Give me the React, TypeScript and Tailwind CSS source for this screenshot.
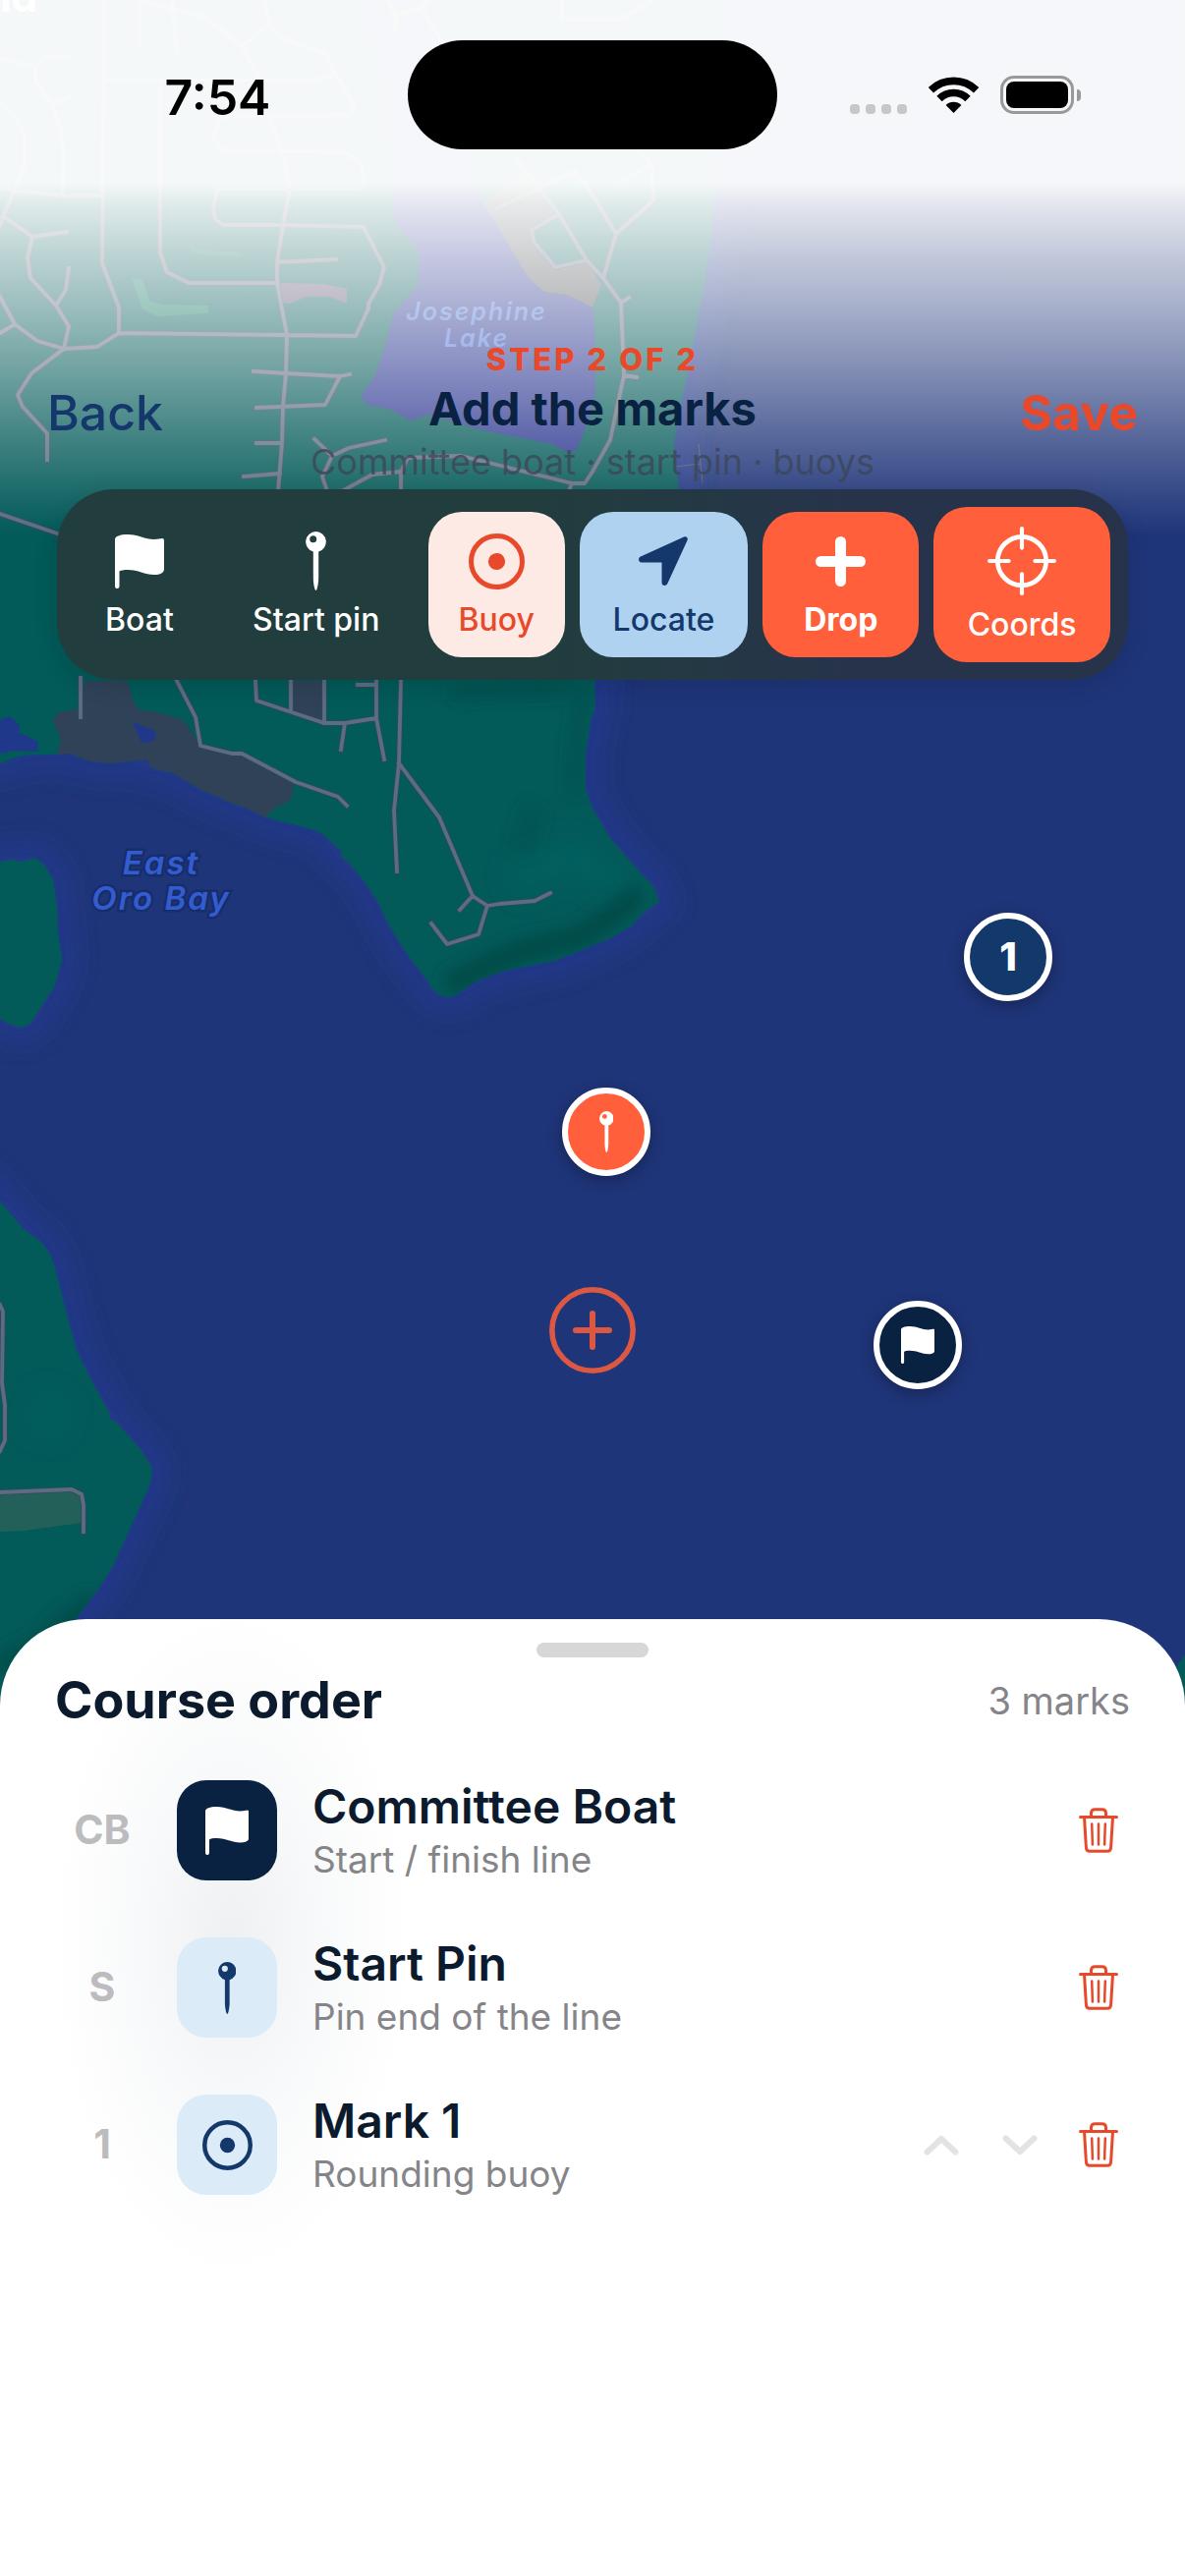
import { useState } from "react";
import type { ReactNode } from "react";

type IconProps = { className?: string };

const FlagIcon = ({ className }: IconProps) => (
  <svg viewBox="0 0 50 55" fill="currentColor" className={className} aria-hidden="true">
    <path d="M0 5C0 2 5 0 13 0C24 0 30 5 40 5C44 5 46 4 48 4Q50 4 50 6V35C50 39 46 41 40 41C30 41 24 36 13 36C9 36 6 36.5 4.5 37.5V52.8A2.2 2.2 0 0 1 0 52.8Z" />
  </svg>
);

const PinIcon = ({ className }: IconProps) => (
  <svg viewBox="0 0 21 60" fill="currentColor" className={className} aria-hidden="true">
    <path
      fillRule="evenodd"
      d="M10.5 0A10.5 10.5 0 0 1 13.2 20.6V47C13.2 52 12.2 57 11.3 59.2Q10.5 60.6 9.7 59.2C8.8 57 7.8 52 7.8 47V20.6A10.5 10.5 0 0 1 10.5 0ZM7.7 4.2A3.5 3.5 0 1 0 7.7 11.2A3.5 3.5 0 1 0 7.7 4.2Z"
    />
  </svg>
);

const TargetIcon = ({ className }: IconProps) => (
  <svg viewBox="0 0 57 57" fill="none" className={className} aria-hidden="true">
    <circle cx="28.5" cy="28.5" r="26" stroke="currentColor" strokeWidth="5" />
    <circle cx="28.5" cy="28.5" r="8.6" fill="currentColor" />
  </svg>
);

const LocateIcon = ({ className }: IconProps) => (
  <svg viewBox="0 0 50 50" fill="currentColor" className={className} aria-hidden="true">
    <path d="M46 .5L2 20.5C-1 22-.5 26.5 3 26.5H23.5V47C23.5 50.5 28 51 29.3 48L49.5 4C50.7 1.5 48.5-.7 46 .5Z" />
  </svg>
);

const PlusIcon = ({ className }: IconProps) => (
  <svg viewBox="0 0 51 51" stroke="currentColor" strokeWidth="11" strokeLinecap="round" className={className} aria-hidden="true">
    <path d="M25.5 5.5V45.5M5.5 25.5H45.5" />
  </svg>
);

const ScopeIcon = ({ className }: IconProps) => (
  <svg viewBox="0 0 68 68" fill="none" stroke="currentColor" strokeLinecap="round" className={className} aria-hidden="true">
    <circle cx="34" cy="34" r="24" strokeWidth="4.6" />
    <path d="M34 2V21M34 47V66M2 34H21M47 34H66" strokeWidth="4" />
  </svg>
);

const TrashIcon = ({ className }: IconProps) => (
  <svg viewBox="0 0 40 46" fill="none" stroke="currentColor" strokeWidth="3" strokeLinecap="round" strokeLinejoin="round" className={className} aria-hidden="true">
    <path d="M1.5 9.4H38.5" />
    <path d="M12.5 9V5.5Q12.5 1.7 16.5 1.7H23.5Q27.5 1.7 27.5 5.5V9" />
    <path d="M5.5 9.5L7.4 40.5Q7.6 44.3 11 44.3H29Q32.4 44.3 32.6 40.5L34.5 9.5" />
    <path d="M13.2 16.5L13.9 37.5M20 16.5V37.5M26.8 16.5L26.1 37.5" strokeWidth="2.5" />
  </svg>
);

const ChevronIcon = ({ className }: IconProps) => (
  <svg viewBox="0 0 36 21" fill="none" stroke="currentColor" strokeWidth="6" strokeLinecap="round" strokeLinejoin="round" className={className} aria-hidden="true">
    <path d="M3.5 17.5L18 4L32.5 17.5" />
  </svg>
);

const WifiIcon = ({ className }: IconProps) => (
  <svg viewBox="0 0 51 37" fill="none" stroke="currentColor" className={className} aria-hidden="true">
    <path d="M2.4 13.8A33 33 0 0 1 48.6 13.8" strokeWidth="7.6" />
    <path d="M11 22.5A20.5 20.5 0 0 1 40 22.5" strokeWidth="7.6" />
    <path d="M25.5 37L17.6 29A11.5 11.5 0 0 1 33.4 29Z" fill="currentColor" stroke="none" />
  </svg>
);

const MAINLAND =
  "M0 0H738L733 120L727 197L724 243L715 300L699 383L690 425L686 453L691 498L675 560L630 640L605 693L606 720L602 730L596 767V803L603 823L621 853L647 883L665 902L671 918L656 928L643 942L621 955L565 978L513 988L484 999L464 1013Q454 1019 440 1007L435 998L422 982L407 960L396 942L384 917L371 898L354 877L347 872L348 867L328 849L321 845L270 832L252 823L237 818L205 804L176 787L153 781L150 773L112 777L92 775L71 767L22 769L0 777Z";
const ISLAND = "M0 877L11 875L22 877L36 873L45 880L54 895L58 920L59 950L63 977L56 1003L31 1042L20 1046L11 1043L0 1037Z";
const SOUTHWEST =
  "M0 1222L23 1250L43 1265L50 1275L55 1287L67 1334L78 1375L93 1405L111 1437L112 1445L117 1446L143 1475L155 1494L153 1510L115 1594L100 1618L78 1647L0 1740Z";

const ROADS = [
  "M106 0L104 268L121 313V339L292 341L362 342L375 314V309L386 290L391 272L370 231L288 229H227L219 223L217 212L222 192H365L370 187L368 168L352 155L224 153L217 138L224 119L356 117L360 107L342 76L331 55L288 39L274 25L269 0",
  "M121 339L99 353L65 355L38 347L15 330L0 302M15 330L0 339",
  "M65 355L70 332L57 311L31 283L28 262L33 241L3 220M33 241L68 236M57 311L67 295L70 273",
  "M65 355L32 380L18 402L23 414L48 441V468",
  "M0 230L3 220L15 193L25 167V137L13 115L0 105",
  "M0 190L15 194L63 199H105M63 199L65 160L62 132L53 107L36 82V68L0 60M36 68L48 58L72 57M53 107L72 97",
  "M163 83V257L170 277L192 288H283",
  "M138 0L208 17L246 47L263 78M106 81L319 82L342 76M142 0V45M175 0L180 52M246 47L274 25",
  "M276 122L287 155L295 192L288 229L282 268V288L292 341L291 380L288 413L287 451L283 500",
  "M282 267L342 264M258 378L291 380L346 383L356 381M346 383L331 412L261 415M261 451H287M248 485L285 482",
  "M320 447L338 464L355 456L392 448M338 464L328 485L333 500",
  "M348 500L379 483L408 480L415 466L469 464L582 492H595L603 480L621 448L635 382L632 308L614 283L627 238L665 204L663 167L649 153M408 480V500M582 492L579 500",
  "M632 308L640 303M635 382L648 384M663 167L630 185",
  "M627 238L603 198L585 174L504 213M525 162L569 218L597 265L614 283M569 218L541 234L543 246L565 272L597 265",
  "M395 0L403 16L402 30M403 16L428 8L436 0M428 8L450 42M572 0V19H632L665 0",
  "M0 523L58 543M82 690V730",
  "M180 693L199 730L204 759L236 767H246L301 796L344 811L353 820",
  "M260 693L261 713L330 736H351L383 731V693M383 731L391 773M364 697H383M351 736L347 763M296 723V693M330 736V693",
  "M408 693L406 777L401 825L404 887M406 777L447 832L481 912L496 922L508 920L544 917L560 909M481 912L468 926M496 922L487 951L455 961L439 940",
  "M0 1328L3 1335L2 1408L5 1430V1466L0 1477M0 1519L73 1516L83 1521L85 1532V1559",
];

const MapBackdrop = () => (
  <svg
    viewBox="0 0 1206 1760"
    preserveAspectRatio="xMidYMin slice"
    className="absolute inset-x-0 top-0 w-full bg-[#1f3579]"
    aria-hidden="true"
  >
    <defs>
      <filter id="soft" x="-20%" y="-20%" width="140%" height="140%">
        <feGaussianBlur stdDeviation="12" />
      </filter>
      <filter id="soft-small" x="-20%" y="-20%" width="140%" height="140%">
        <feGaussianBlur stdDeviation="8" />
      </filter>
      <clipPath id="land">
        <path d={MAINLAND} />
        <path d={ISLAND} />
        <path d={SOUTHWEST} />
      </clipPath>
      <linearGradient id="haze" x1="0" y1="0" x2="0" y2="1">
        <stop offset="0" stopColor="#fff" stopOpacity="0.96" />
        <stop offset="0.34" stopColor="#fff" stopOpacity="0.96" />
        <stop offset="0.385" stopColor="#fff" stopOpacity="0.87" />
        <stop offset="0.48" stopColor="#fff" stopOpacity="0.73" />
        <stop offset="0.57" stopColor="#fff" stopOpacity="0.61" />
        <stop offset="0.71" stopColor="#fff" stopOpacity="0.41" />
        <stop offset="0.83" stopColor="#fff" stopOpacity="0.23" />
        <stop offset="0.93" stopColor="#fff" stopOpacity="0.09" />
        <stop offset="1" stopColor="#fff" stopOpacity="0" />
      </linearGradient>
    </defs>

    {/* shallow water along the coast */}
    <g fill="none" stroke="#203888" strokeWidth="34" filter="url(#soft)">
      <path d={MAINLAND} />
      <path d={ISLAND} />
      <path d={SOUTHWEST} />
    </g>

    <g fill="#025a59">
      <path d={MAINLAND} />
      <path d={ISLAND} />
      <path d={SOUTHWEST} />
      <path d="M1206 1684L1180 1720V1760H1206Z" />
    </g>

    {/* hill shading */}
    <g clipPath="url(#land)">
      <g fill="none" stroke="#03423f" filter="url(#soft-small)">
        <path d="M455 1004L490 985L530 968L590 954L625 930L650 908" strokeWidth="22" strokeOpacity="0.65" />
        <path d="M594 700L586 760L584 810" strokeWidth="14" strokeOpacity="0.35" />
        <path d="M545 820L530 870" strokeWidth="26" strokeOpacity="0.25" />
        <path d="M100 1630L40 1680L0 1700" strokeWidth="30" strokeOpacity="0.6" />
        <path d="M460 705L580 700" strokeWidth="16" strokeOpacity="0.35" />
      </g>
      <g fill="none" stroke="#046360" filter="url(#soft)">
        <path d="M520 900L580 870L625 900" strokeWidth="30" strokeOpacity="0.7" />
        <path d="M40 1460L60 1420" strokeWidth="40" strokeOpacity="0.4" />
      </g>
    </g>

    <path fill="#304258" d="M86 693H130L136 715L142 723L156 724L187 733L204 759L246 767L299 795L297 812L290 818L281 821L270 832L252 823L237 818L205 804L176 787L153 781L150 773L112 777L92 775L71 767L58 768L62 753L54 733L60 725L83 721Z" />
    <path fill="#304258" d="M296 693H329L331 735L296 723Z" />
    <path fill="#20388a" d="M0 733L10 729L19 737L20 746L39 755L38 765L13 764L4 767L0 766ZM135 735L157 743L159 751L154 755L144 756Z" />
    <path fill="#24605a" d="M0 1519L73 1516L83 1521V1550L25 1558L0 1559Z" />
    <path fill="#2a3590" d="M362 0L392 90L398 197L402 227L426 257L425 290L400 320L392 353L381 383L367 403L375 413L396 416L417 428L438 422L487 437L562 452L579 461L587 458L600 425L606 400L605 330L603 313L577 300L554 297L538 283L515 245L490 205L470 130L440 0Z" />
    <path fill="#5b5258" fillOpacity="0.85" d="M490 205L540 175L569 218L541 234L543 246L565 272L597 265L612 290L603 313L577 300L554 297L538 283L515 245Z" />
    <path fill="#5a5270" d="M284 288L330 289L353 294V309L335 302H312L295 309L287 308Z" />
    <path fill="#12805e" fillOpacity="0.7" d="M134 283L145 284L152 306L165 310L212 311V319L160 322L145 315Z" />
    <path fill="#12805e" fillOpacity="0.4" d="M188 243L200 254L245 257V261L210 260L195 256Z" />
    <path fill="none" stroke="#7b7a4a" strokeOpacity="0.5" strokeWidth="1" d="M687 475L713 472M711 452L715 492" />

    <g fill="none" strokeLinejoin="round" strokeLinecap="square">
      <path d={ROADS.join("")} stroke="#2f4a5c" strokeWidth="5.6" />
      <path d={ROADS.join("")} stroke="#5d6c80" strokeWidth="3.8" />
    </g>

    <g fontFamily="Inter, 'Liberation Sans', sans-serif" fontWeight="600" textAnchor="middle" fontStyle="italic">
      <g fill="#4a74dc" fontSize="25" letterSpacing="2">
        <text x="485" y="326">Josephine</text>
        <text x="485" y="353">Lake</text>
      </g>
      <g fill="#335dce" stroke="#182d6b" strokeWidth="5" paintOrder="stroke" fontSize="33" letterSpacing="2">
        <text x="164" y="890">East</text>
        <text x="164" y="926">Oro Bay</text>
      </g>
    </g>

    <rect width="1206" height="545" fill="url(#haze)" />
    <text x="38" y="12" textAnchor="end" fontFamily="Inter, sans-serif" fontSize="42" fontWeight="700" fill="#fff">
      nd
    </text>
  </svg>
);

const StatusBar = () => (
  <div className="grid grid-cols-[1fr_376px_1fr] items-center pt-[41px]">
    <time className="pt-1 pl-7 text-center text-[50px] leading-none font-semibold text-black">7:54</time>
    <div className="h-[111px] rounded-full bg-black" />
    <div className="flex items-center justify-center gap-[22px] pr-8">
      <div className="flex gap-[6px] pt-7">
        {[0, 1, 2, 3].map((dot) => (
          <span key={dot} className="size-[10px] rounded-[4px] bg-[#c6c7c9]" />
        ))}
      </div>
      <WifiIcon className="w-[51px]" />
      <div className="flex items-center gap-[3px]">
        <div className="h-[39px] w-[75px] rounded-[14px] border-3 border-[#98999b] p-[3px]">
          <div className="h-full rounded-[8px] bg-black" />
        </div>
        <span className="h-3 w-1 rounded-r-full bg-[#98999b]" />
      </div>
    </div>
  </div>
);

type Tool = {
  id: string;
  label: string;
  icon: ReactNode;
  style: string;
};

const tools: Tool[] = [
  {
    id: "boat",
    label: "Boat",
    icon: <FlagIcon className="h-[55px]" />,
    style: "font-medium text-white",
  },
  {
    id: "pin",
    label: "Start pin",
    icon: <PinIcon className="h-15" />,
    style: "font-medium text-white",
  },
  {
    id: "buoy",
    label: "Buoy",
    icon: <TargetIcon className="h-[57px]" />,
    style: "bg-[#fdeae4] font-medium text-[#e8492b]",
  },
  {
    id: "locate",
    label: "Locate",
    icon: <LocateIcon className="h-[50px]" />,
    style: "bg-[#aed2ef] font-medium text-[#14386b]",
  },
  {
    id: "drop",
    label: "Drop",
    icon: <PlusIcon className="h-[51px]" />,
    style: "bg-[#ff5f3a] font-bold text-white",
  },
  {
    id: "coords",
    label: "Coords",
    icon: <ScopeIcon className="h-[70px]" />,
    style: "bg-[#ff5f3a] font-medium text-white",
  },
];

const Toolbar = () => (
  <div className="mx-[58px] mt-1 grid grid-cols-[132fr_198fr_139fr_172fr_159fr_180fr] items-center gap-[15px] rounded-[58px] bg-linear-to-r from-[#213d3d] from-45% to-[#27334b] to-75% p-[18px] shadow-[0_6px_24px_rgba(0,0,0,0.12)]">
    {tools.map((tool) => (
      <button
        key={tool.id}
        type="button"
        className={`flex flex-col items-center gap-3 rounded-[34px] py-5 text-[32px] leading-9 ${tool.style}`}
      >
        <span className="flex min-h-15 items-center">{tool.icon}</span>
        <span className="whitespace-nowrap">{tool.label}</span>
      </button>
    ))}
  </div>
);

const MapPins = () => (
  <>
    <div className="absolute top-[929px] left-[981px] flex size-[90px] items-center justify-center rounded-full border-6 border-white bg-[#13386a] text-[40px] font-extrabold text-white shadow-[0_4px_16px_rgba(0,0,0,0.3)]">
      1
    </div>
    <div className="absolute top-[1107px] left-[572px] flex size-[90px] items-center justify-center rounded-full border-6 border-white bg-[#ff5f3a] text-white shadow-[0_4px_16px_rgba(0,0,0,0.3)]">
      <PinIcon className="h-[42px]" />
    </div>
    <div className="absolute top-[1324px] left-[889px] flex size-[90px] items-center justify-center rounded-full border-6 border-white bg-[#0a2242] text-white shadow-[0_4px_16px_rgba(0,0,0,0.3)]">
      <FlagIcon className="h-[38px]" />
    </div>
    <svg
      viewBox="0 0 88 88"
      fill="none"
      stroke="#dc5843"
      className="absolute top-[1310px] left-1/2 size-[88px] -translate-x-1/2"
      aria-hidden="true"
    >
      <circle cx="44" cy="44" r="41.2" strokeWidth="5.6" />
      <path d="M44 27V61M27 44H61" strokeWidth="6" strokeLinecap="round" />
    </svg>
  </>
);

type Mark = {
  code: string;
  name: string;
  detail: string;
  icon: ReactNode;
  tile: string;
  movable?: boolean;
};

const initialMarks: Mark[] = [
  {
    code: "CB",
    name: "Committee Boat",
    detail: "Start / finish line",
    icon: <FlagIcon className="h-[49px]" />,
    tile: "bg-[#0a2242] text-white",
  },
  {
    code: "S",
    name: "Start Pin",
    detail: "Pin end of the line",
    icon: <PinIcon className="h-[53px]" />,
    tile: "bg-[#dcebf8] text-[#14386b]",
  },
  {
    code: "1",
    name: "Mark 1",
    detail: "Rounding buoy",
    icon: <TargetIcon className="h-[51px]" />,
    tile: "bg-[#dcebf8] text-[#14386b]",
    movable: true,
  },
];

const App = () => {
  const [marks, setMarks] = useState(initialMarks);

  const removeMark = (code: string) => {
    setMarks(marks.filter((mark) => mark.code !== code));
  };

  return (
    <div className="relative flex min-h-screen flex-col overflow-hidden bg-[#1f3579] font-[Inter,'Liberation_Sans',sans-serif]">
      <MapBackdrop />

      <main className="relative flex-1">
        <StatusBar />

        <header className="mt-[196px] grid grid-cols-[1fr_auto_1fr] items-center px-12">
          <button type="button" className="justify-self-start text-[50px] leading-none font-medium text-[#14386b]">
            Back
          </button>
          <div className="text-center">
            <p className="text-[31px] leading-9 font-extrabold tracking-widest text-[#e8492b]">STEP 2 OF 2</p>
            <h1 className="text-[47px] leading-16 font-bold text-[#0a2242]">Add the marks</h1>
            <p className="text-[36px] leading-11 text-[#3c4658]/80">Committee boat · start pin · buoys</p>
          </div>
          <button type="button" className="justify-self-end text-[50px] leading-none font-bold text-[#e8492b]">
            Save
          </button>
        </header>

        <div className="pt-[2px]">
          <Toolbar />
        </div>
        <MapPins />
      </main>

      <section className="relative rounded-t-[88px] bg-white bg-[radial-gradient(ellipse_180px_340px_at_235px_330px,#eff0f2,#f8f9fa_50%,#ffffff)] px-14 pt-6 pb-[385px]">
        <div className="mx-auto h-[15px] w-[114px] rounded-full bg-[#d7d7d8]" />
        <div className="mt-3 flex items-center justify-between">
          <h2 className="text-[52px] leading-16 font-bold text-[#0b1a2c]">Course order</h2>
          <span className="text-[38px] text-[#858589]">{marks.length} marks</span>
        </div>

        <ul className="mt-[46px] flex flex-col gap-[52px]">
          {marks.map((mark) => (
            <li key={mark.code} className="flex items-center">
              <span className="w-24 text-center text-[41px] font-bold text-[#bcbcbf]">{mark.code}</span>
              <span className={`ml-7 flex size-[102px] items-center justify-center rounded-[30px] ${mark.tile}`}>
                {mark.icon}
              </span>
              <div className="ml-9 flex-1">
                <h3 className="text-[48px] leading-15 font-semibold text-[#0b1a2c]">{mark.name}</h3>
                <p className="text-[37px] leading-12 text-[#858589]">{mark.detail}</p>
              </div>
              <div className="flex items-center gap-4">
                {mark.movable && (
                  <>
                    <button type="button" aria-label="Move up" className="flex h-16 w-16 items-center justify-center text-[#e3e3e4]">
                      <ChevronIcon className="w-9" />
                    </button>
                    <button type="button" aria-label="Move down" className="flex h-16 w-16 items-center justify-center text-[#e3e3e4]">
                      <ChevronIcon className="w-9 rotate-180" />
                    </button>
                  </>
                )}
                <button
                  type="button"
                  aria-label={`Delete ${mark.name}`}
                  onClick={() => removeMark(mark.code)}
                  className="flex h-16 w-16 items-center justify-center text-[#e8492b]"
                >
                  <TrashIcon className="h-[46px]" />
                </button>
              </div>
            </li>
          ))}
        </ul>
      </section>
    </div>
  );
};

export default App;
